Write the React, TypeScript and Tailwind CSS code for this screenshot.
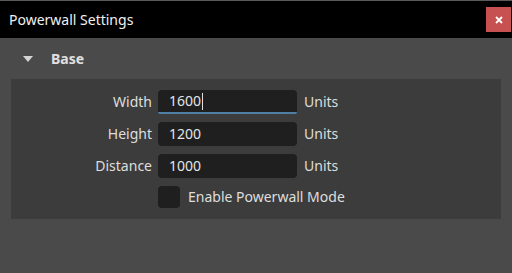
import React from "react";

const font = { fontFamily: '"Noto Sans", "Open Sans", sans-serif' };

function Row({ label, value, active }: { label: string; value: string; active?: boolean }) {
  return (
    <div className="flex items-center h-6">
      <div className="w-[147px] pr-[6px] text-right text-[14px] text-[#dedede] leading-none">{label}</div>
      <div
        className={`w-[139px] h-6 rounded-[4px] bg-[#1f1f1f] flex items-center pl-[11px] text-[14px] text-[#e4e4e4] leading-none ${
          active ? "border-b-2 border-[#4f7fa6] rounded-b-[2px]" : ""
        }`}
      >
        <span>{value}</span>
        {active && <span className="w-px h-[17px] bg-[#e0e0e0] ml-[1px]" />}
      </div>
      <div className="pl-[7px] text-[14px] text-[#dedede] leading-none">Units</div>
    </div>
  );
}

export default function App() {
  return (
    <div className="w-[512px] h-[273px] bg-[#4a4a4a] flex flex-col overflow-hidden" style={font}>
      <div className="h-[38px] bg-black border-t border-[#5a5a5a] flex items-center justify-between pl-[9px] pr-[1px]">
        <span className="text-[14px] text-[#f0f0f0]">Powerwall Settings</span>
        <div className="w-[25px] h-[25px] bg-[#c75050] flex items-center justify-center">
          <svg width="8" height="8" viewBox="0 0 8 8">
            <path d="M1 1 L7 7 M7 1 L1 7" stroke="white" strokeWidth="1.8" />
          </svg>
        </div>
      </div>
      <div className="h-[41px] flex items-center pl-[23px]">
        <svg width="10" height="6" viewBox="0 0 10 6" className="mt-[1px]">
          <path d="M0 0 L10 0 L5 6 Z" fill="#d4d4d4" />
        </svg>
        <span className="ml-[18px] text-[14px] font-bold text-[#e0e0e0]">Base</span>
      </div>
      <div className="mx-[11px] bg-[#3c3c3c] py-[11px] flex flex-col gap-2">
        <Row label="Width" value="1600" active />
        <Row label="Height" value="1200" />
        <Row label="Distance" value="1000" />
        <div className="flex items-center h-[22px]">
          <div className="w-[147px]" />
          <div className="w-[22px] h-[22px] rounded-[4px] bg-[#1f1f1f]" />
          <span className="pl-[8px] text-[14px] text-[#dedede] leading-none">Enable Powerwall Mode</span>
        </div>
      </div>
    </div>
  );
}
